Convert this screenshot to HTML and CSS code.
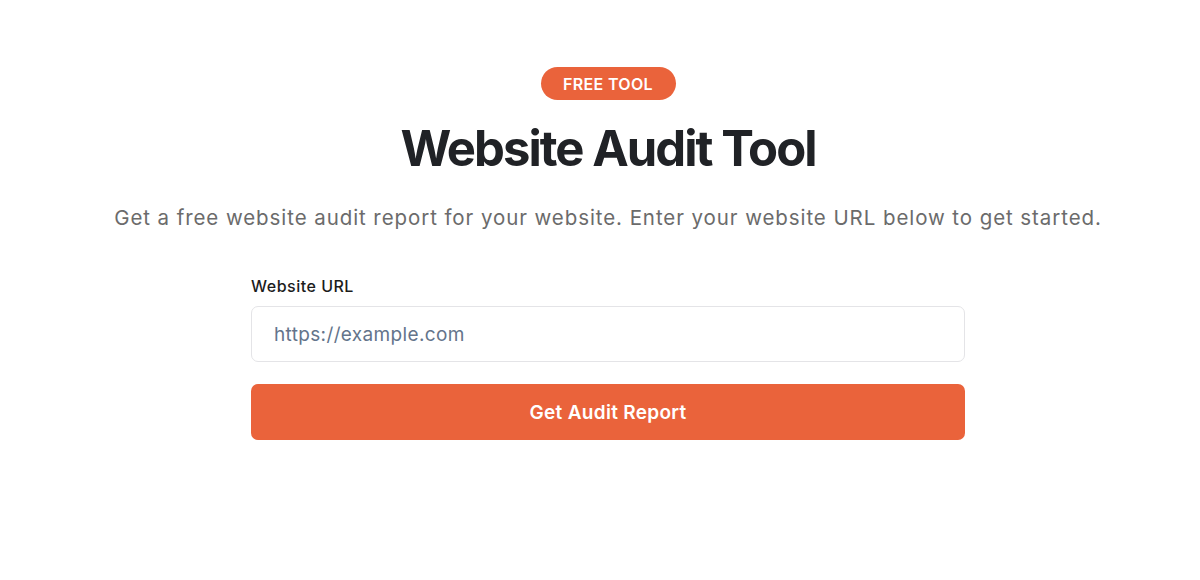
FILE: index.html
```html
<!DOCTYPE html>
<html lang="en">
<head>
<meta charset="utf-8">
<title>Website Audit Tool</title>
<link rel="stylesheet" href="styles.css">
</head>
<body>
<main class="page">
  <section class="hero">
    <span class="badge">FREE TOOL</span>
    <h1 class="title">Website Audit Tool</h1>
    <p class="subtitle">Get a free website audit report for your website. Enter your website URL below to get started.</p>
    <form class="audit-form">
      <label class="label" for="url">Website URL</label>
      <input class="input" id="url" type="text" placeholder="https://example.com">
      <button class="button" type="button">Get Audit Report</button>
    </form>
  </section>
</main>
</body>
</html>
```
FILE: styles.css
```css
* { box-sizing: border-box; }
html, body { margin: 0; padding: 0; background: #ffffff; }
body {
  font-family: Inter, "Noto Sans", "Liberation Sans", sans-serif;
  color: #202226;
}
.page {
  width: 1200px;
  height: 580px;
  padding: 67px 0 0 16px;
}
.hero {
  display: flex;
  flex-direction: column;
  align-items: center;
}
.badge {
  display: inline-flex;
  align-items: center;
  justify-content: center;
  width: 135px;
  height: 33px;
  border-radius: 17px;
  background: #ea633b;
  color: #ffffff;
  font-size: 16px;
  font-weight: 600;
  letter-spacing: 0.02em;
}
.title {
  margin: 19px 0 0;
  font-size: 49px;
  line-height: 60px;
  font-weight: 700;
  letter-spacing: -0.04em;
  color: #202226;
}
.subtitle {
  margin: 25px 0 0;
  font-size: 20.5px;
  line-height: 28px;
  color: #6b6b6b;
  letter-spacing: 0.92px;
}
.audit-form {
  margin-top: 44px;
  width: 714px;
  display: flex;
  flex-direction: column;
}
.label {
  font-size: 16px;
  line-height: 20px;
  font-weight: 500;
  color: #1c1c1c;
  letter-spacing: 0.5px;
}
.input {
  margin-top: 10px;
  height: 56px;
  border: 1px solid #e4e4e7;
  border-radius: 7px;
  padding: 0 22px;
  font-family: inherit;
  font-size: 19px;
  color: #1c1c1c;
  background: #ffffff;
  outline: none;
  letter-spacing: 0.35px;
}
.input::placeholder { color: #64748b; }
.button {
  margin-top: 22px;
  height: 56px;
  border: none;
  border-radius: 7px;
  background: #ea633b;
  color: #ffffff;
  font-family: inherit;
  font-size: 19px;
  font-weight: 600;
  letter-spacing: 0.3px;
  cursor: pointer;
}
```
